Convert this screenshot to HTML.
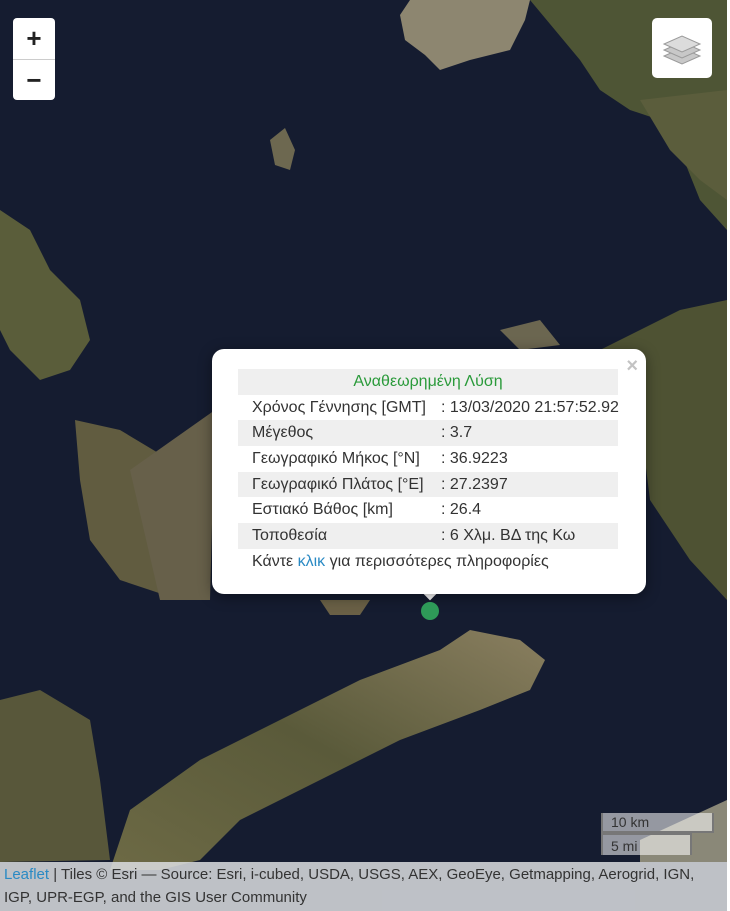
<!DOCTYPE html>
<html><head><meta charset="utf-8"><style>
body{margin:0;width:730px;height:911px;overflow:hidden;font-family:"Liberation Sans",sans-serif;background:#fff}
#map{position:absolute;left:0;top:0;width:727px;height:911px;background:#151c30;overflow:hidden}
svg.bg{position:absolute;left:0;top:0}
.zoom{position:absolute;left:13px;top:18px;width:42px;height:82px;background:#fff;border-radius:4px}
.zoom div{height:41px;line-height:41px;text-align:center;font-size:26px;font-weight:bold;color:#222}
.zoom div:first-child{border-bottom:1px solid #ccc}
.layers{position:absolute;left:652px;top:18px;width:60px;height:60px;background:#fff;border-radius:5px}
.popup{position:absolute;left:212px;top:349px;width:434px;height:245px;background:#fff;border-radius:12px;box-shadow:0 3px 14px rgba(0,0,0,.4)}
.tip{position:absolute;left:422px;top:581px;width:16px;height:16px;background:#fff;transform:rotate(45deg)}
.close{position:absolute;right:8px;top:6px;color:#c3c3c3;font-size:20px;font-weight:bold}
table{position:absolute;left:26px;top:20px;width:380px;border-collapse:collapse;font-size:16px;color:#333;table-layout:fixed}
td{height:25.7px;padding:0 0 0 14px;white-space:nowrap;overflow:visible}
td.v{padding-left:0}
tr.g td{background:#efefef}
.hd{text-align:center;color:#2a9a3a;padding:0}
.marker{position:absolute;left:421px;top:602px;width:18px;height:18px;border-radius:50%;background:#2e9a58}
.scale{position:absolute;left:601px;font-size:14px;color:#333;background:rgba(255,255,255,.55);border:2px solid #777;border-top:none;padding-left:8px;box-sizing:border-box}
.attr{position:absolute;left:0;top:862px;width:727px;height:49px;background:rgba(220,222,225,.85);font-size:15px;color:#333;line-height:23px;padding:1px 4px;box-sizing:border-box;white-space:nowrap}
.attr a{color:#2a8ac4;text-decoration:none}
</style></head><body>
<div id="map">
<svg class="bg" width="727" height="911" viewBox="0 0 727 911">
<defs><linearGradient id="k" x1="0" y1="1" x2="1" y2="0"><stop offset="0" stop-color="#6d6a45"/><stop offset=".5" stop-color="#5a5a3a"/><stop offset="1" stop-color="#8a7f60"/></linearGradient></defs>
<path d="M410 0 L530 0 L525 20 L510 50 L470 60 L440 70 L425 55 L405 40 L400 15Z" fill="#8d8670"/>
<path d="M530 0 L727 0 L727 230 L700 200 L680 150 L660 120 L630 110 L600 90 L580 60 L555 30Z" fill="#4e5535"/>
<path d="M640 100 L727 90 L727 200 L700 180 L670 150Z" fill="#5b5d3c"/>
<path d="M270 140 L285 128 L295 150 L290 170 L275 165Z" fill="#6d6850"/>
<path d="M0 210 L30 230 L50 270 L80 300 L90 340 L70 370 L40 380 L10 350 L0 330Z" fill="#5a5d3a"/>
<path d="M75 420 L120 430 L170 460 L210 480 L205 530 L200 580 L180 600 L120 580 L90 540 L80 480Z" fill="#615c40"/>
<path d="M130 470 L215 410 L210 600 L160 600 Z" fill="#67604a"/>
<path d="M320 600 L370 600 L360 615 L330 615Z" fill="#6a6046"/>
<path d="M600 350 L680 310 L727 300 L727 600 L690 560 L650 500 L640 420Z" fill="#4e5233"/>
<path d="M500 330 L540 320 L560 345 L520 350Z" fill="#6b6650"/>
<path d="M110 870 L130 810 L200 760 L280 720 L360 680 L440 650 L470 630 L520 640 L545 660 L530 690 L480 710 L400 740 L320 780 L240 820 L200 860 L160 870 Z" fill="url(#k)"/>
<path d="M0 700 L40 690 L90 720 L100 780 L110 860 L0 862Z" fill="#58573a"/>
<path d="M640 840 L727 800 L727 862 L640 862Z" fill="#8a8878"/>
</svg>
<div class="zoom"><div>+</div><div>−</div></div>
<div class="layers"><svg width="60" height="60" viewBox="0 0 60 60"><g fill="#c8c8c8" stroke="#9a9a9a" stroke-width="1"><path d="M12 38 L30 46 L48 38 L30 30Z"/><path d="M12 32 L30 40 L48 32 L30 24Z"/><path d="M12 26 L30 34 L48 26 L30 18Z" fill="#dcdcdc"/></g></svg></div>
<div class="tip"></div>
<div class="popup"><span class="close">×</span>
<table>
<colgroup><col style="width:203px"><col style="width:177px"></colgroup>
<tr class="g"><td colspan="2" class="hd">Αναθεωρημένη Λύση</td></tr>
<tr><td>Χρόνος Γέννησης [GMT]</td><td class="v">: 13/03/2020 21:57:52.92</td></tr>
<tr class="g"><td>Μέγεθος</td><td class="v">: 3.7</td></tr>
<tr><td>Γεωγραφικό Μήκος [°N]</td><td class="v">: 36.9223</td></tr>
<tr class="g"><td>Γεωγραφικό Πλάτος [°E]</td><td class="v">: 27.2397</td></tr>
<tr><td>Εστιακό Βάθος [km]</td><td class="v">: 26.4</td></tr>
<tr class="g"><td>Τοποθεσία</td><td class="v">: 6 Χλμ. ΒΔ της Κω</td></tr>
<tr><td colspan="2">Κάντε <span style="color:#2a8ac4">κλικ</span> για περισσότερες πληροφορίες</td></tr>
</table></div>
<div class="marker"></div>
<div class="scale" style="top:813px;width:113px;height:20px;line-height:19px">10 km</div>
<div class="scale" style="top:833px;width:91px;height:22px;line-height:22px;border-top:2px solid #777;border-bottom:none">5 mi</div>
<div class="attr"><a>Leaflet</a> | Tiles © Esri — Source: Esri, i-cubed, USDA, USGS, AEX, GeoEye, Getmapping, Aerogrid, IGN,<br>IGP, UPR-EGP, and the GIS User Community</div>
</div>
</body></html>
